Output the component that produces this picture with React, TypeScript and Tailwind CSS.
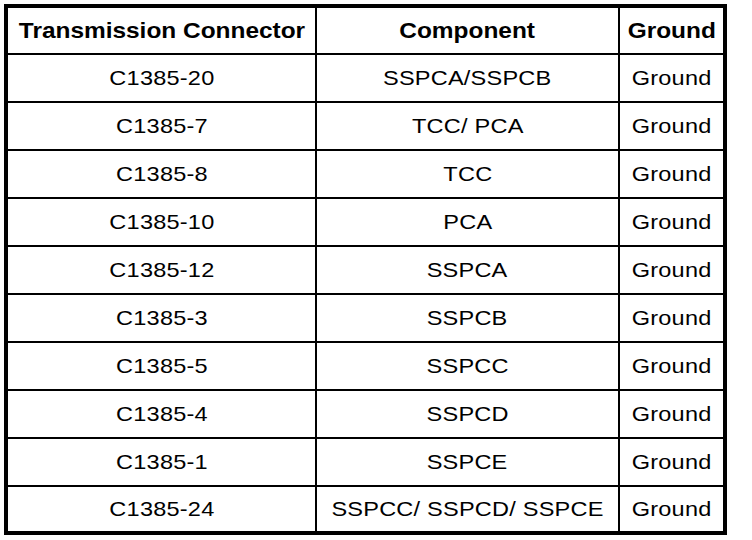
const rows: [string, string][] = [
  ["C1385-20", "SSPCA/SSPCB"],
  ["C1385-7", "TCC/ PCA"],
  ["C1385-8", "TCC"],
  ["C1385-10", "PCA"],
  ["C1385-12", "SSPCA"],
  ["C1385-3", "SSPCB"],
  ["C1385-5", "SSPCC"],
  ["C1385-4", "SSPCD"],
  ["C1385-1", "SSPCE"],
  ["C1385-24", "SSPCC/ SSPCD/ SSPCE"],
];

function Cell({ text, head, cls }: { text: string; head?: boolean; cls: string }) {
  return (
    <div className={`${cls} border-black flex items-center justify-center`}>
      <span
        className={
          head
            ? "inline-block whitespace-pre scale-x-[1.11] text-[22px] font-bold"
            : "inline-block whitespace-pre scale-x-[1.12] text-[21px] tracking-[0.2px]"
        }
      >
        {text}
      </span>
    </div>
  );
}

export default function App() {
  return (
    <div className="w-[752px] h-[540px] bg-white p-1 font-['Liberation_Sans',Arial,sans-serif] text-black">
      <div className="w-[723px] border-4 border-black grid grid-cols-[307px_303px_105px]">
        <Cell head text="Transmission Connector" cls="h-[45px]" />
        <Cell head text="Component" cls="h-[45px] border-l-2" />
        <Cell head text="Ground" cls="h-[45px] border-l-2" />
        {rows.map(([conn, comp], i) => {
          const h = i === rows.length - 1 ? "h-[46px]" : "h-[48px]";
          return [
            <Cell key={i + "a"} text={conn} cls={`${h} border-t-2`} />,
            <Cell key={i + "b"} text={comp} cls={`${h} border-t-2 border-l-2`} />,
            <Cell key={i + "c"} text="Ground" cls={`${h} border-t-2 border-l-2`} />,
          ];
        })}
      </div>
    </div>
  );
}
